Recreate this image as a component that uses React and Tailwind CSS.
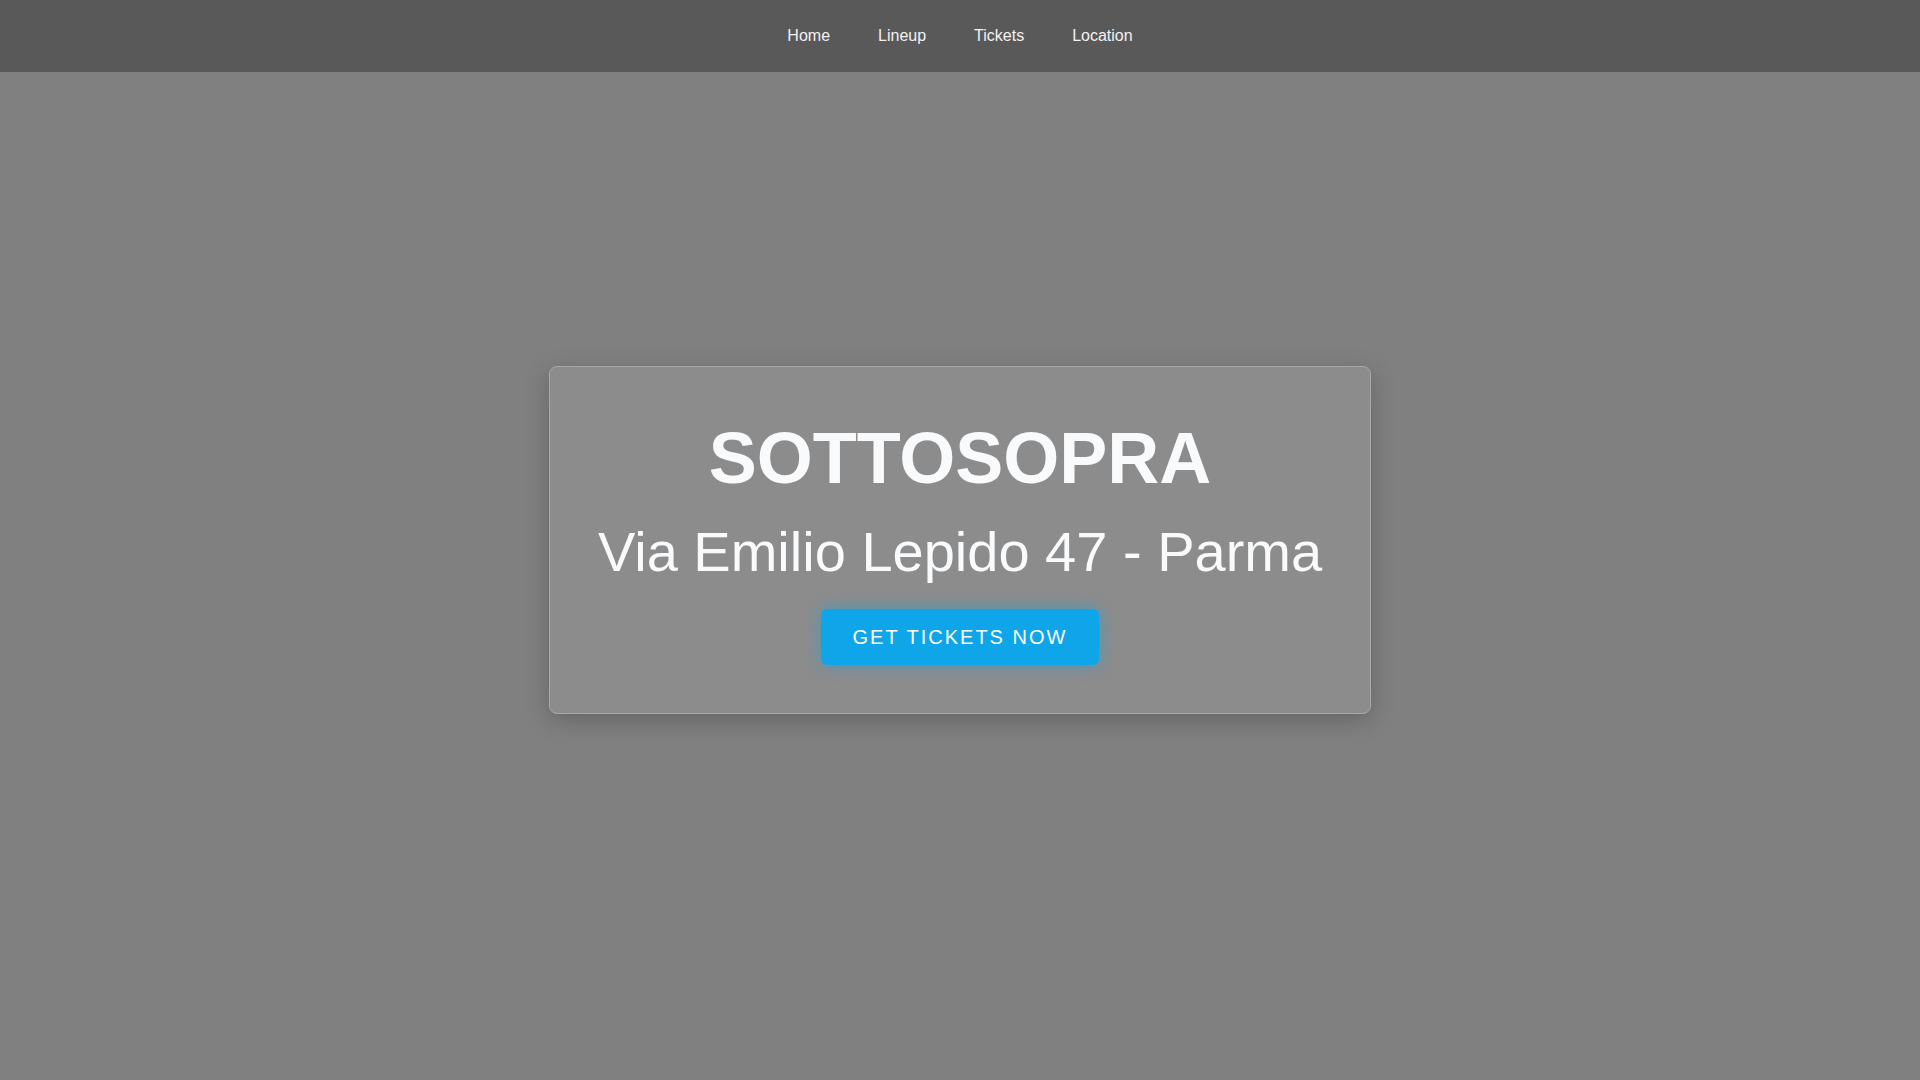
const links = ["Home", "Lineup", "Tickets", "Location"];

export default function App() {
  return (
    <div
      className="relative min-h-screen bg-[#808080] text-slate-50"
      style={{ fontFamily: '"Liberation Sans", Arial, sans-serif' }}
    >
      <header className="absolute inset-x-0 top-0 z-10 h-[72px] bg-[#595959]">
        <nav className="flex h-full items-center justify-center gap-12 text-base text-[#f2f2f2]">
          {links.map((l) => (
            <a key={l} href="#" className="hover:text-white">
              {l}
            </a>
          ))}
        </nav>
      </header>

      <main className="flex min-h-screen items-center justify-center">
        <section className="flex w-fit flex-col items-center rounded-lg border border-[#a8a8a8] bg-[#8c8c8c] px-12 pt-[55px] pb-[48px] text-center shadow-[0_6px_24px_rgba(0,0,0,0.22)]">
          <h1 className="text-[72px] font-bold leading-none">SOTTOSOPRA</h1>
          <p className="mt-[30px] text-[56px] leading-none">Via Emilio Lepido 47 - Parma</p>
          <a
            href="#"
            className="mt-[29px] rounded-md bg-[#0ea5e9] px-8 py-3.5 text-xl tracking-[2px] text-white shadow-[0_0_16px_rgba(14,165,233,0.55)]"
          >
            GET TICKETS NOW
          </a>
        </section>
      </main>
    </div>
  );
}
